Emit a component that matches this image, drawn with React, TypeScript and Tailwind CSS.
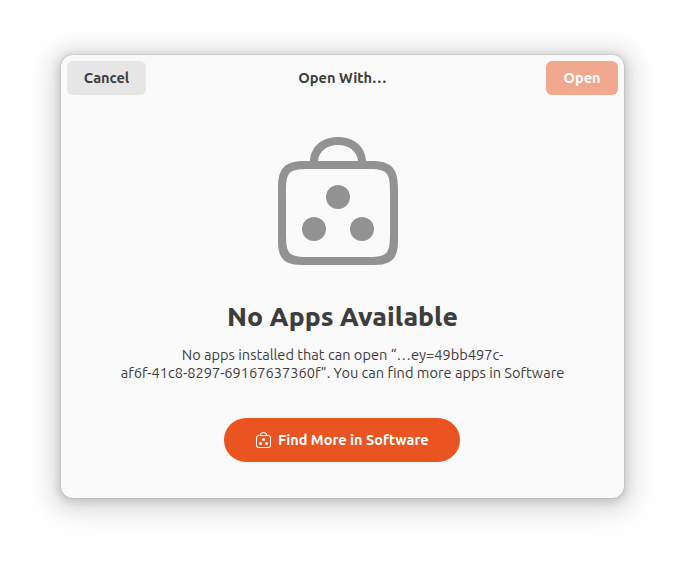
import React from "react";

function SoftwareIcon({ className, viewBox = "0 0 16 16" }: { className: string; viewBox?: string }) {
  return (
    <svg viewBox={viewBox} className={className} fill="currentColor" aria-hidden="true">
      <path
        fillRule="evenodd"
        d="M4.5 3C4.6 1.2 6 0 8 0S11.4 1.2 11.5 3H12C14.7 3 15.5 3.8 15.5 6.5V13C15.5 15.2 14.7 16 12.5 16H3.5C1.3 16 .5 15.2 .5 13V6.5C.5 3.8 1.3 3 4 3ZM5.5 3H10.5C10.4 1.8 9.4 1 8 1S5.6 1.8 5.5 3ZM4.5 4C1.8 4 1.5 4.3 1.5 7V12C1.5 14.7 1.8 15 4.5 15H11.5C14.2 15 14.5 14.7 14.5 12V7C14.5 4.3 14.2 4 11.5 4Z"
      />
      <circle cx="8" cy="7.5" r="1.5" />
      <circle cx="5" cy="11.5" r="1.5" />
      <circle cx="11" cy="11.5" r="1.5" />
    </svg>
  );
}

export default function App() {
  return (
    <div className="h-[565px] w-[685px] overflow-hidden bg-white pt-[55px] pl-[61px] font-['Ubuntu','Noto_Sans',sans-serif] text-[#3d3d3d]">
      <main className="flex h-[443px] w-[563px] flex-col rounded-xl bg-[#fafafa] shadow-[0_0_0_1px_rgba(0,0,0,0.06),0_2px_8px_2px_rgba(0,0,0,0.14),0_3px_20px_10px_rgba(0,0,0,0.09),0_6px_32px_16px_rgba(0,0,0,0.04)]">
        <header className="grid h-[46px] shrink-0 grid-cols-[79px_1fr_72px] items-center px-1.5 text-[14.6px] font-bold">
          <button className="h-[34px] rounded-md bg-[#e6e6e6] whitespace-nowrap">Cancel</button>
          <h1 className="pr-[7px] text-center">Open With…</h1>
          <button className="h-[34px] rounded-md bg-[#f2a78f] text-white">Open</button>
        </header>
        <section className="flex flex-col items-center">
          <SoftwareIcon className="mt-9 mr-[9px] size-32 text-[#929292]" />
          <h2 className="mt-[31px] text-[26.5px] leading-10 font-extrabold whitespace-nowrap">No Apps Available</h2>
          <p className="mt-2.5 text-center text-[14.6px] leading-[18px] whitespace-nowrap">
            No apps installed that can open “…ey=49bb497c-
            <br />
            af6f-41c8-8297-69167637360f”. You can find more apps in Software
          </p>
          <button className="mt-9 mr-px flex h-11 w-[236px] items-center rounded-full bg-[#e95420] pl-[31px] text-[14.5px] font-bold whitespace-nowrap text-white">
            <SoftwareIcon className="mr-[7px] size-4 shrink-0" viewBox="-0.5 0 16 16" />
            <span>Find More in Software</span>
          </button>
        </section>
      </main>
    </div>
  );
}
